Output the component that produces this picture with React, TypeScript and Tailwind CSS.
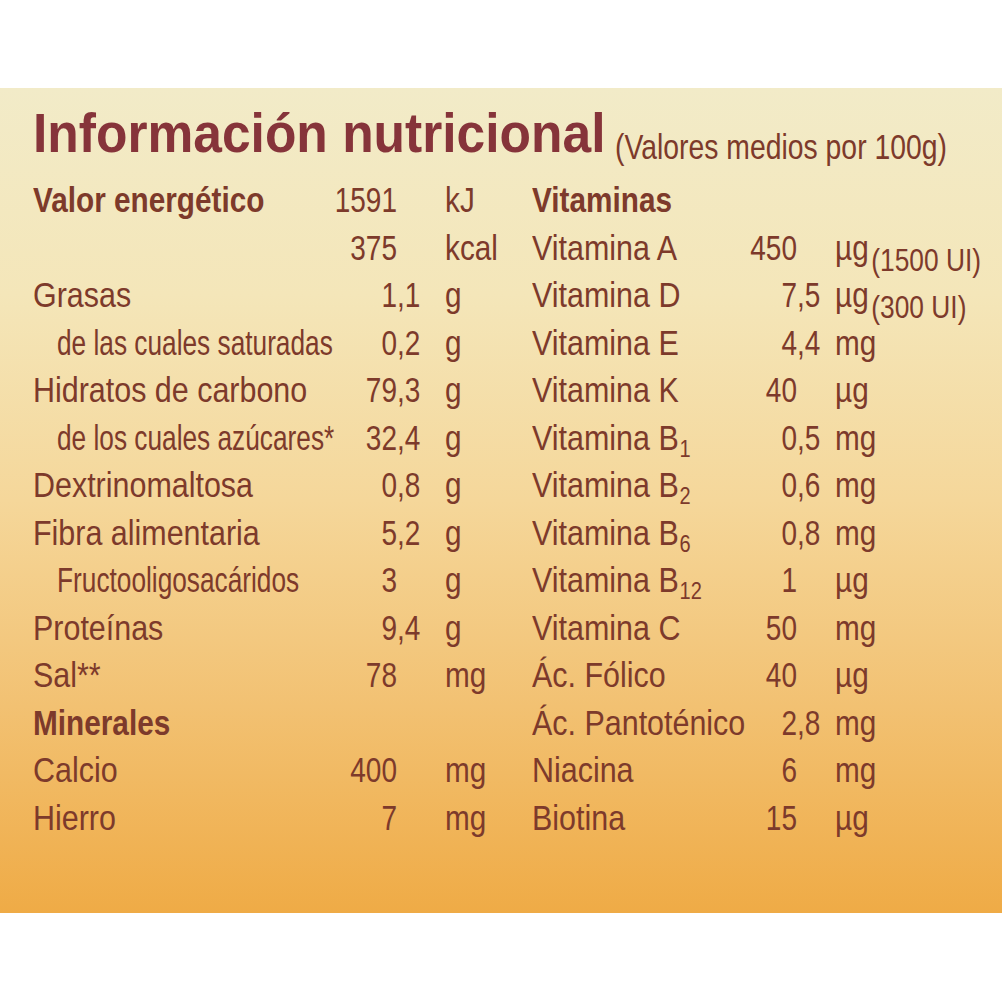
import React from "react";

interface Row {
  label: string;
  sub?: string;
  bold?: boolean;
  indent?: boolean;
  int?: string;
  frac?: string;
  unit?: string;
  note?: string;
}

const leftRows: Row[] = [
  { label: "Valor energético", bold: true, int: "1591", unit: "kJ" },
  { label: "", int: "375", unit: "kcal" },
  { label: "Grasas", int: "1", frac: ",1", unit: "g" },
  { label: "de las cuales saturadas", indent: true, int: "0", frac: ",2", unit: "g" },
  { label: "Hidratos de carbono", int: "79", frac: ",3", unit: "g" },
  { label: "de los cuales azúcares*", indent: true, int: "32", frac: ",4", unit: "g" },
  { label: "Dextrinomaltosa", int: "0", frac: ",8", unit: "g" },
  { label: "Fibra alimentaria", int: "5", frac: ",2", unit: "g" },
  { label: "Fructooligosacáridos", indent: true, int: "3", unit: "g" },
  { label: "Proteínas", int: "9", frac: ",4", unit: "g" },
  { label: "Sal**", int: "78", unit: "mg" },
  { label: "Minerales", bold: true },
  { label: "Calcio", int: "400", unit: "mg" },
  { label: "Hierro", int: "7", unit: "mg" },
];

const rightRows: Row[] = [
  { label: "Vitaminas", bold: true },
  { label: "Vitamina A", int: "450", unit: "µg", note: "(1500 UI)" },
  { label: "Vitamina D", int: "7", frac: ",5", unit: "µg", note: "(300 UI)" },
  { label: "Vitamina E", int: "4", frac: ",4", unit: "mg" },
  { label: "Vitamina K", int: "40", unit: "µg" },
  { label: "Vitamina B", sub: "1", int: "0", frac: ",5", unit: "mg" },
  { label: "Vitamina B", sub: "2", int: "0", frac: ",6", unit: "mg" },
  { label: "Vitamina B", sub: "6", int: "0", frac: ",8", unit: "mg" },
  { label: "Vitamina B", sub: "12", int: "1", unit: "µg" },
  { label: "Vitamina C", int: "50", unit: "mg" },
  { label: "Ác. Fólico", int: "40", unit: "µg" },
  { label: "Ác. Pantoténico", int: "2", frac: ",8", unit: "mg" },
  { label: "Niacina", int: "6", unit: "mg" },
  { label: "Biotina", int: "15", unit: "µg" },
];

// The print uses a narrow grotesque; Liberation Sans is squeezed to match.
const labelScale = (row: Row) =>
  row.bold ? "scale-x-[0.85]" : row.indent ? "scale-x-[0.75]" : "scale-x-[0.87]";

const NutrientRow = ({ row, side }: { row: Row; side: "left" | "right" }) => {
  const cols =
    side === "left"
      ? "grid-cols-[274px_90px_48px_auto]"
      : "grid-cols-[183px_82px_38px_auto]";
  return (
    <div className={`grid h-[47.5px] items-baseline leading-[47.5px] ${cols}`}>
      <span
        className={`origin-left whitespace-nowrap ${labelScale(row)} ${
          row.bold ? "font-bold" : ""
        } ${row.indent ? "ml-[24px]" : ""}`}
      >
        {row.label}
        {row.sub && (
          <span className="ml-[1px] align-[-7px] text-[23px] leading-none">{row.sub}</span>
        )}
      </span>
      <span className="origin-right scale-x-[0.8] text-right">{row.int}</span>
      <span className="origin-left scale-x-[0.8]">{row.frac}</span>
      <span className="origin-left scale-x-[0.85] whitespace-nowrap">
        {row.unit}
        {row.note && (
          <span className="ml-[3px] align-[-11px] text-[31px] leading-none">
            {row.note}
          </span>
        )}
      </span>
    </div>
  );
};

export default function App() {
  return (
    <div className="h-[1002px] w-[1002px] overflow-hidden bg-white pt-[88px] font-['Liberation_Sans','Arial',sans-serif]">
      <div className="h-[825px] w-full bg-[linear-gradient(180deg,#f2ebc8_0%,#f4e6b9_25%,#f5d79a_50%,#f2c172_75%,#efab46_100%)] pt-[17px] text-[#7d3a2b]">
        <h1 className="flex h-[56px] items-baseline whitespace-nowrap pl-[33px] leading-[56px]">
          <span className="w-[582px] shrink-0 origin-left scale-x-[0.92] text-[56px] font-bold text-[#86343a]">
            Información nutricional
          </span>
          <span className="origin-left translate-y-[7px] scale-x-[0.81] text-[35px] font-normal">
            (Valores medios por 100g)
          </span>
        </h1>
        <div className="mt-[15px] grid grid-cols-[499px_1fr] pl-[33px] text-[35px]">
          <div>
            {leftRows.map((r, i) => (
              <NutrientRow key={i} row={r} side="left" />
            ))}
          </div>
          <div>
            {rightRows.map((r, i) => (
              <NutrientRow key={i} row={r} side="right" />
            ))}
          </div>
        </div>
      </div>
    </div>
  );
}
